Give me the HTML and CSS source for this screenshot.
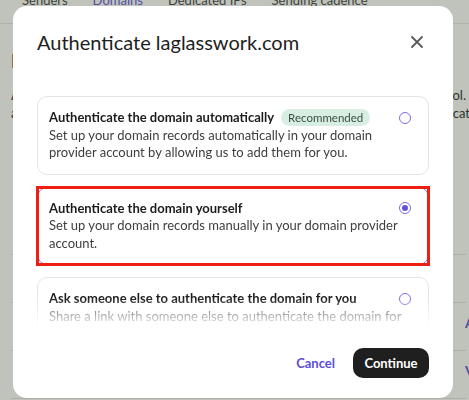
FILE: index.html
```html
<!DOCTYPE html>
<html lang="en">
<head>
    <meta charset="UTF-8">
    <title>Authenticate domain</title>
    <link rel="stylesheet" href="styles.css">
</head>
<body>
    <div class="page">
        <nav class="tabs">
            <span class="tab">Senders</span>
            <span class="tab tab-active">Domains</span>
            <span class="tab">Dedicated IPs</span>
            <span class="tab">Sending cadence</span>
        </nav>

        <div class="page-content">
            <h2 class="page-title">Domains</h2>
            <div class="intro-line">
                <span>Authenticate</span>
                <span>tool.</span>
            </div>
            <div class="intro-line">
                <span>and</span>
                <span class="cut-word">verification</span>
            </div>

            <div class="domain-table">
                <div class="domain-row"></div>
                <div class="domain-row"><span class="row-link">Authenticate</span></div>
                <div class="domain-row"><span class="row-link">View</span></div>
                <div class="domain-row"></div>
            </div>
        </div>
    </div>

    <div class="backdrop"></div>

    <div class="modal">
        <div class="modal-header">
            <h1 class="modal-title">Authenticate laglasswork.com</h1>
            <button class="close-btn" aria-label="Close">
                <svg width="12" height="12" viewBox="0 0 12 12">
                    <path d="M1 1 L11 11 M11 1 L1 11" stroke="#5a5a5a" stroke-width="1.8" stroke-linecap="round"/>
                </svg>
            </button>
        </div>

        <div class="modal-body">
            <div class="option">
                <div class="option-title">
                    Authenticate the domain automatically
                    <span class="badge">Recommended</span>
                    <span class="radio"></span>
                </div>
                <div class="option-desc">Set up your domain records automatically in your domain provider account by allowing us to add them for you.</div>
            </div>

            <div class="option option-selected">
                <div class="option-title">
                    Authenticate the domain yourself
                    <span class="radio radio-on"></span>
                </div>
                <div class="option-desc">Set up your domain records manually in your domain provider account.</div>
            </div>

            <div class="option">
                <div class="option-title">
                    Ask someone else to authenticate the domain for you
                    <span class="radio"></span>
                </div>
                <div class="option-desc">Share a link with someone else to authenticate the domain for you. They won't need an account.</div>
            </div>
        </div>

        <div class="modal-footer">
            <button class="btn-link">Cancel</button>
            <button class="btn-primary">Continue</button>
        </div>
    </div>
</body>
</html>
```

FILE: styles.css
```css
body {
    margin: 0;
    padding: 0;
    font-family: Lato, "Noto Sans", sans-serif;
    background: #ffffff;
    color: #242424;
    width: 469px;
    height: 400px;
    overflow: hidden;
    position: relative;
}

.page {
    height: 400px;
    overflow: hidden;
}

.tabs {
    display: flex;
    gap: 25px;
    padding-left: 22px;
    margin-top: -10px;
    height: 33px;
    border-bottom: 1px solid #e6e6e6;
    font-size: 13px;
    line-height: 20px;
}

.tab {
    color: #3b3b3b;
}

.tab-active {
    color: #5b4fd6;
}

.page-content {
    padding: 0 3px 0 11px;
    overflow: hidden;
}

.page-title {
    margin: 26px 0 14px;
    font-size: 18px;
    font-weight: 700;
    line-height: 22px;
    color: #2a2a2a;
}

.intro-line {
    display: flex;
    justify-content: space-between;
    font-size: 13px;
    line-height: 18px;
    white-space: nowrap;
}

.cut-word {
    margin-right: -22px;
}

.domain-table {
    margin-top: 132px;
}

.domain-row {
    height: 48px;
    border-top: 1px solid #e2e2e2;
    display: flex;
    align-items: flex-start;
    padding: 10px 0 0 454px;
    box-sizing: border-box;
}

.row-link {
    color: #5b4fd6;
    font-size: 14px;
    line-height: 20px;
    font-weight: 700;
}

.backdrop {
    position: absolute;
    inset: 0;
    background: rgba(68, 78, 60, 0.34);
}

.modal {
    position: absolute;
    left: 13px;
    top: 6px;
    width: 440px;
    height: 392px;
    background: #ffffff;
    border-radius: 14px;
    display: flex;
    flex-direction: column;
    box-sizing: border-box;
}

.modal-header {
    display: flex;
    justify-content: space-between;
    align-items: center;
    padding: 22px 30px 0 24px;
    height: 28px;
}

.modal-title {
    margin: 0;
    font-size: 20px;
    font-weight: 400;
    line-height: 28px;
    color: #1e1e1e;
}

.close-btn {
    border: none;
    background: none;
    padding: 0;
    width: 12px;
    height: 12px;
    display: flex;
    cursor: pointer;
}

.modal-body {
    height: 272px;
    padding: 40px 24px 0;
    box-sizing: border-box;
    overflow: hidden;
    display: flex;
    flex-direction: column;
    gap: 12px;
    -webkit-mask-image: linear-gradient(to bottom, #000 calc(100% - 30px), transparent 100%);
    mask-image: linear-gradient(to bottom, #000 calc(100% - 30px), transparent 100%);
}

.option {
    flex-shrink: 0;
    padding: 12px 17px 12px 11px;
    border: 1px solid #e4e4e4;
    border-radius: 10px;
    font-size: 13px;
    line-height: 1.35;
}

.option-selected {
    position: relative;
    border-color: #8c80ea;
}

/* red highlight drawn over the chosen option */
.option-selected::after {
    content: "";
    position: absolute;
    inset: -2px;
    border: 3px solid #ee1f10;
    pointer-events: none;
}

.option-title {
    font-weight: 700;
    color: #1c1c1c;
    display: flex;
    align-items: center;
    gap: 7px;
}

.badge {
    font-weight: 400;
    font-size: 11.5px;
    line-height: 17px;
    padding: 0 7px;
    border-radius: 9px;
    background: #d9eee3;
    color: #3a4d43;
}

.option-desc {
    color: #3e3e3e;
}

.radio {
    flex-shrink: 0;
    width: 12px;
    height: 12px;
    margin-left: auto;
    border: 1.5px solid #7b6de4;
    border-radius: 50%;
    box-sizing: border-box;
    position: relative;
}

.radio-on::after {
    content: "";
    position: absolute;
    inset: 2px;
    border-radius: 50%;
    background: #6152dc;
}

.modal-footer {
    display: flex;
    justify-content: flex-end;
    align-items: center;
    gap: 18px;
    padding: 20px 24px 20px;
}

.btn-link {
    border: none;
    background: none;
    padding: 0;
    font-family: inherit;
    font-size: 13px;
    font-weight: 700;
    color: #5a4ed8;
    cursor: pointer;
}

.btn-primary {
    border: none;
    height: 30px;
    width: 76px;
    border-radius: 10px;
    background: #1f1f1f;
    color: #ffffff;
    font-family: inherit;
    font-size: 13px;
    font-weight: 700;
    cursor: pointer;
}
```
